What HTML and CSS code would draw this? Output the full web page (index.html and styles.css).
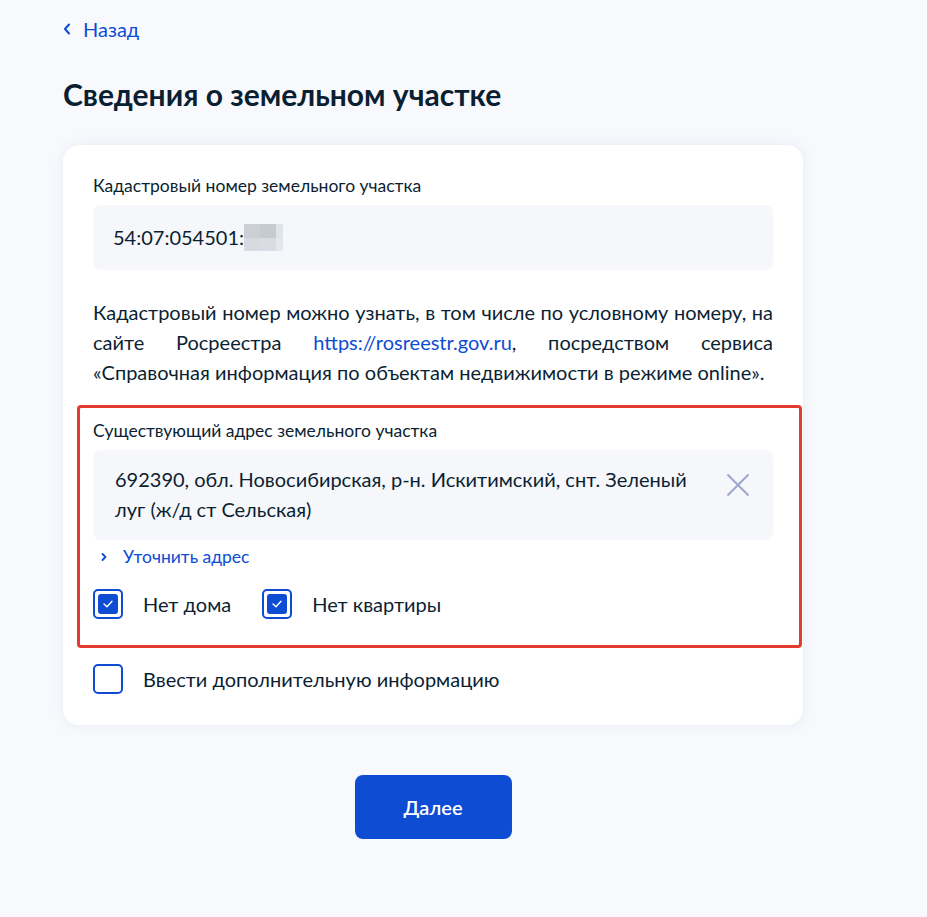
FILE: index.html
```html
<!DOCTYPE html>
<html lang="ru">
<head>
<meta charset="utf-8">
<title>Сведения о земельном участке</title>
<link rel="stylesheet" href="styles.css">
</head>
<body>
<div class="page">
  <a class="back" href="#">
    <svg class="back-icon" width="8" height="12" viewBox="0 0 8 12"><path d="M6 1.5 L2 6 L6 10.5" fill="none" stroke="#0d4cd3" stroke-width="2" stroke-linecap="round" stroke-linejoin="round"/></svg>
    <span>Назад</span>
  </a>
  <h1 class="title">Сведения о земельном участке</h1>

  <div class="card">
    <div class="field">
      <div class="label">Кадастровый номер земельного участка</div>
      <div class="input input-single">
        <span>54:07:054501:</span><span class="blur"><i class="b1"></i><i class="b2"></i><i class="b3"></i><i class="b4"></i><i class="b5"></i><i class="b6"></i></span>
      </div>
    </div>

    <p class="info">Кадастровый номер можно узнать, в том числе по условному номеру, на сайте Росреестра <a href="#">https://rosreestr.gov.ru</a>, посредством сервиса «Справочная информация по объектам недвижимости в режиме online».</p>

    <div class="highlight">
      <div class="label">Существующий адрес земельного участка</div>
      <div class="input input-multi">
        <div class="input-text">692390, обл. Новосибирская, р-н. Искитимский, снт. Зеленый луг (ж/д ст Сельская)</div>
        <svg class="clear" width="24" height="24" viewBox="0 0 24 24"><path d="M1.5 1.5 L22.5 22.5 M22.5 1.5 L1.5 22.5" stroke="#9ba8cc" stroke-width="2" fill="none"/></svg>
      </div>
      <a class="refine" href="#">
        <svg width="8" height="10" viewBox="0 0 8 10"><path d="M2.5 2 L5.5 5 L2.5 8" fill="none" stroke="#0d4cd3" stroke-width="1.8" stroke-linecap="round" stroke-linejoin="round"/></svg>
        <span>Уточнить адрес</span>
      </a>
      <div class="checks">
        <label class="check">
          <span class="box checked"><span class="inner"><svg width="12" height="10" viewBox="0 0 12 10"><path d="M2 5 L5 7.8 L10 2.2" fill="none" stroke="#fff" stroke-width="1.4" stroke-linecap="round" stroke-linejoin="round"/></svg></span></span>
          <span class="check-text">Нет дома</span>
        </label>
        <label class="check">
          <span class="box checked"><span class="inner"><svg width="12" height="10" viewBox="0 0 12 10"><path d="M2 5 L5 7.8 L10 2.2" fill="none" stroke="#fff" stroke-width="1.4" stroke-linecap="round" stroke-linejoin="round"/></svg></span></span>
          <span class="check-text">Нет квартиры</span>
        </label>
      </div>
    </div>

    <label class="check extra">
      <span class="box"></span>
      <span class="check-text">Ввести дополнительную информацию</span>
    </label>
  </div>

  <div class="actions">
    <button class="btn" type="button">Далее</button>
  </div>
</div>
</body>
</html>
```

FILE: styles.css
```css
* { box-sizing: border-box; }

body {
  margin: 0;
  background: #f8f9fc;
  font-family: Lato, "Noto Sans", "Liberation Sans", sans-serif;
  color: #0b1f33;
}

.page {
  padding: 16px 63px 40px;
  width: 866px;
}

.back {
  display: inline-flex;
  align-items: center;
  gap: 12px;
  color: #0d4cd3;
  text-decoration: none;
  font-size: 20px;
  line-height: 26px;
}

.back-icon { display: block; }

.title {
  margin: 34px 0 0;
  font-size: 30px;
  line-height: 36px;
  font-weight: 700;
  color: #0b1f33;
}

.card {
  margin-top: 33px;
  background: #fff;
  border-radius: 16px;
  padding: 30px 30px 31px;
  box-shadow: 0 0 12px rgba(180, 195, 235, 0.25);
  display: flex;
  flex-direction: column;
}

.label {
  font-size: 17.5px;
  line-height: 22px;
  color: #0b1f33;
}

.input {
  margin-top: 8px;
  background: #f5f7fa;
  border-radius: 8px;
  font-size: 20px;
  line-height: 30px;
}

.input-single {
  height: 65px;
  padding: 17px 20px 18px;
  display: flex;
  align-items: center;
}

.blur {
  display: grid;
  grid-template-columns: 16px 16px 7px;
  grid-template-rows: 14px 13px;
}
.blur i { display: block; }
.b1 { background: #ccd0d6; }
.b2 { background: #c6cad1; }
.b3 { background: #dfe3ea; }
.b4 { background: #d7dae0; }
.b5 { background: #d9dce2; }
.b6 { background: #e3e7ee; }

.info {
  margin: 27px 0 0;
  font-size: 20px;
  line-height: 30px;
  text-align: justify;
  color: #0b1f33;
}

.info a {
  color: #0d4cd3;
  text-decoration: none;
}

.highlight {
  margin: 18px -29px 0 -16px;
  border: 3px solid #e33b30;
  border-radius: 4px;
  padding: 12px 26px 26px 13px;
}

.input-multi {
  display: flex;
  align-items: flex-start;
  justify-content: space-between;
  padding: 14px 23px 16px 22px;
}

.input-text {
  width: 590px;
}

.clear {
  margin-top: 9px;
  flex: none;
}

.refine {
  margin-top: 6px;
  display: flex;
  align-items: center;
  gap: 15px;
  padding-left: 7px;
  color: #0d4cd3;
  text-decoration: none;
  font-size: 17.5px;
  line-height: 22px;
}

.refine svg { display: block; }

.checks {
  margin-top: 21px;
  display: flex;
  gap: 31px;
}

.check {
  display: flex;
  align-items: center;
  gap: 20px;
  font-size: 20px;
  line-height: 30px;
  color: #0b1f33;
}

.box {
  width: 30px;
  height: 30px;
  border: 2px solid #0d4cd3;
  border-radius: 5px;
  display: flex;
  align-items: center;
  justify-content: center;
  flex: none;
}

.inner {
  width: 20px;
  height: 20px;
  border-radius: 3px;
  background: #0d4cd3;
  display: flex;
  align-items: center;
  justify-content: center;
}

.inner svg { display: block; }

.extra {
  margin-top: 16px;
}

.actions {
  display: flex;
  justify-content: center;
  width: 740px;
  margin-top: 50px;
}

.btn {
  width: 157px;
  height: 64px;
  border: none;
  border-radius: 8px;
  background: #0d4cd3;
  color: #fff;
  font-family: Lato, "Noto Sans", "Liberation Sans", sans-serif;
  font-size: 20px;
  font-weight: 600;
}
```
